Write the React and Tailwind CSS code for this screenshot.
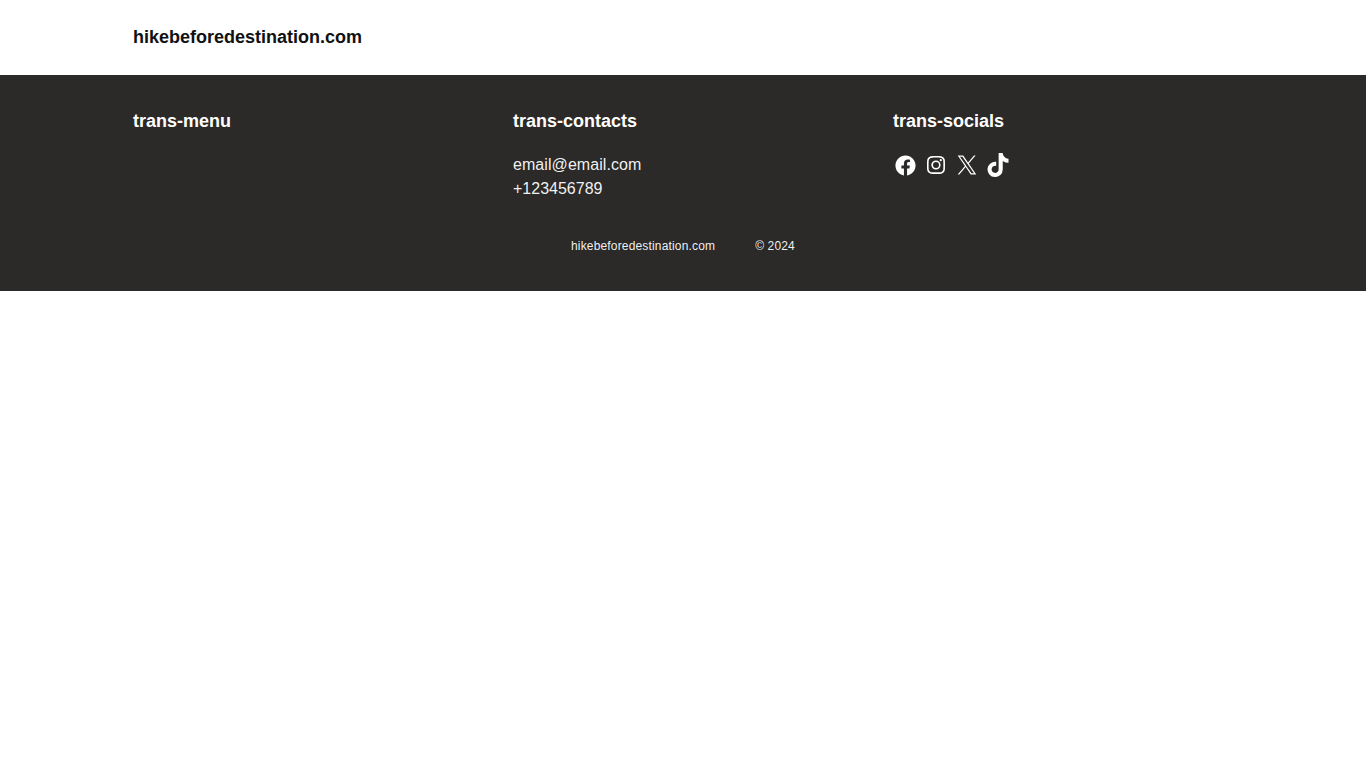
import React from "react";
import { IoLogoFacebook } from "react-icons/io5";
import { BsInstagram } from "react-icons/bs";
import { FaTiktok } from "react-icons/fa6";

function XLogo() {
  return (
    <svg width="24" height="24" viewBox="0 0 24 24" fill="currentColor">
      <g transform="translate(2.5 2.5) scale(0.79)">
        <path d="M14.234 10.162 22.977 0h-2.072l-7.591 8.824L7.251 0H.258l9.168 13.343L.258 24H2.33l8.016-9.318L16.749 24h6.993zm-2.837 3.299-.929-1.329L3.076 1.56h3.182l5.965 8.532.929 1.329 7.754 11.09h-3.182z" />
      </g>
    </svg>
  );
}

export default function App() {
  return (
    <div className="font-['Liberation_Sans',Arial,sans-serif] bg-white min-h-screen antialiased">
      <header className="h-[75px] flex items-center pb-[2px]">
        <div className="w-[1100px] mx-auto">
          <a href="#" className="text-lg font-bold text-[#111111]">hikebeforedestination.com</a>
        </div>
      </header>

      <footer className="h-[216px] bg-[#2b2a29] text-white pt-[32px]">
        <div className="w-[1100px] mx-auto grid grid-cols-3 gap-10">
          <div>
            <h3 className="text-lg font-bold leading-[28px]">trans-menu</h3>
          </div>
          <div>
            <h3 className="text-lg font-bold leading-[28px] mb-[18px]">trans-contacts</h3>
            <p className="text-base leading-6 tracking-[0.07px] text-white/95">email@email.com</p>
            <p className="text-base leading-6 text-white/95">+123456789</p>
          </div>
          <div>
            <h3 className="text-lg font-bold leading-[28px] mb-[18px]">trans-socials</h3>
            <div className="flex gap-[7px]">
              <a href="#" className="flex items-center justify-center w-6 h-6"><IoLogoFacebook size={23} /></a>
              <a href="#" className="flex items-center justify-center w-6 h-6"><BsInstagram size={18} /></a>
              <a href="#" className="block"><XLogo /></a>
              <a href="#" className="flex items-center justify-center w-6 h-6"><FaTiktok size={24} /></a>
            </div>
          </div>
        </div>
        <div className="flex justify-center gap-10 mt-[37px] text-xs leading-4 tracking-[0.16px] text-white/95">
          <span>hikebeforedestination.com</span>
          <span>© 2024</span>
        </div>
      </footer>
    </div>
  );
}
